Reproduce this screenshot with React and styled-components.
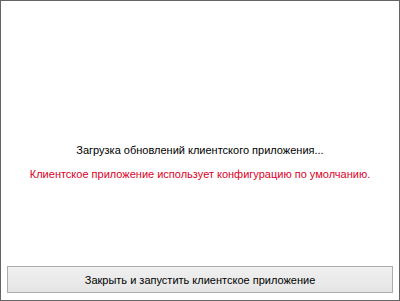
import React from 'react';
import styled, { createGlobalStyle } from 'styled-components';

const GlobalStyle = createGlobalStyle`
  html, body {
    margin: 0;
    padding: 0;
    background: #ffffff;
  }
  * {
    box-sizing: border-box;
  }
`;

const Window = styled.div`
  width: 400px;
  height: 301px;
  border: 1px solid #646464;
  background: #ffffff;
  display: flex;
  flex-direction: column;
  font-family: "Liberation Sans", Arial, sans-serif;
  font-size: 11px;
`;

const Content = styled.div`
  flex: 1;
  display: flex;
  flex-direction: column;
  align-items: center;
  gap: 8px;
  padding-top: 141px;
`;

const Message = styled.div`
  line-height: 16px;
  color: ${(p) => (p.$warn ? '#dc0028' : '#000000')};
  white-space: nowrap;
`;

const Button = styled.button`
  margin: 0 6px 7px;
  height: 27px;
  border: 1px solid #acacac;
  border-radius: 0;
  background: linear-gradient(#f0f0f0, #e5e5e5);
  color: #000000;
  font-family: inherit;
  font-size: 11px;
  line-height: 16px;
  padding: 0;
  cursor: pointer;
`;

export default function App() {
  return (
    <>
      <GlobalStyle />
      <Window>
        <Content>
          <Message>Загрузка обновлений клиентского приложения...</Message>
          <Message $warn>Клиентское приложение использует конфигурацию по умолчанию.</Message>
        </Content>
        <Button>Закрыть и запустить клиентское приложение</Button>
      </Window>
    </>
  );
}
